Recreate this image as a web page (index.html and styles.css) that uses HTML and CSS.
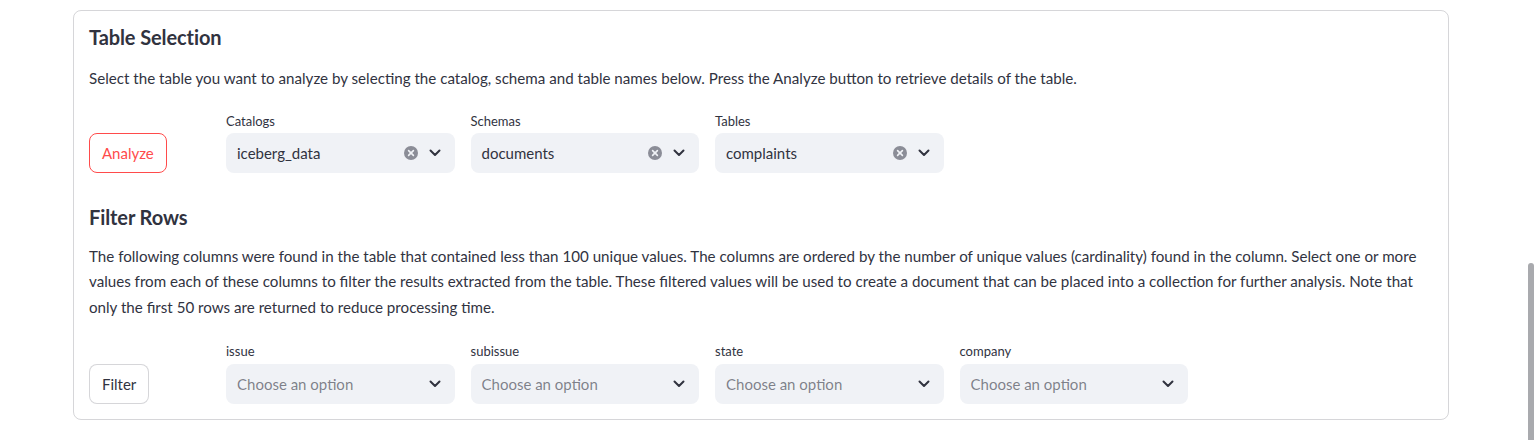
FILE: index.html
```html
<!DOCTYPE html>
<html>
<head>
<meta charset="utf-8">
<link rel="stylesheet" href="styles.css">
</head>
<body>
<div class="page">
  <section class="card">
    <h4 class="heading">Table Selection</h4>
    <p class="text text-1">Select the table you want to analyze by selecting the catalog, schema and table names below. Press the Analyze button to retrieve details of the table.</p>
    <div class="row row-1">
      <div class="btn-col"><button class="btn btn-primary">Analyze</button></div>
      <div class="field">
        <div class="label">Catalogs</div>
        <div class="select">
          <span class="value">iceberg_data</span>
          <span class="clear"><svg width="14" height="14" viewBox="0 0 14 14"><circle cx="7" cy="7" r="7" fill="#8b8d97"/><path d="M4.6 4.6 L9.4 9.4 M9.4 4.6 L4.6 9.4" stroke="#f0f2f6" stroke-width="1.6" stroke-linecap="round"/></svg></span>
          <span class="chev"><svg width="12" height="8" viewBox="0 0 12 8"><path d="M1.5 1.5 L6 6 L10.5 1.5" fill="none" stroke="#31333f" stroke-width="2" stroke-linecap="round" stroke-linejoin="round"/></svg></span>
        </div>
      </div>
      <div class="field">
        <div class="label">Schemas</div>
        <div class="select">
          <span class="value">documents</span>
          <span class="clear"><svg width="14" height="14" viewBox="0 0 14 14"><circle cx="7" cy="7" r="7" fill="#8b8d97"/><path d="M4.6 4.6 L9.4 9.4 M9.4 4.6 L4.6 9.4" stroke="#f0f2f6" stroke-width="1.6" stroke-linecap="round"/></svg></span>
          <span class="chev"><svg width="12" height="8" viewBox="0 0 12 8"><path d="M1.5 1.5 L6 6 L10.5 1.5" fill="none" stroke="#31333f" stroke-width="2" stroke-linecap="round" stroke-linejoin="round"/></svg></span>
        </div>
      </div>
      <div class="field">
        <div class="label">Tables</div>
        <div class="select">
          <span class="value">complaints</span>
          <span class="clear"><svg width="14" height="14" viewBox="0 0 14 14"><circle cx="7" cy="7" r="7" fill="#8b8d97"/><path d="M4.6 4.6 L9.4 9.4 M9.4 4.6 L4.6 9.4" stroke="#f0f2f6" stroke-width="1.6" stroke-linecap="round"/></svg></span>
          <span class="chev"><svg width="12" height="8" viewBox="0 0 12 8"><path d="M1.5 1.5 L6 6 L10.5 1.5" fill="none" stroke="#31333f" stroke-width="2" stroke-linecap="round" stroke-linejoin="round"/></svg></span>
        </div>
      </div>
    </div>

    <h4 class="heading heading-2">Filter Rows</h4>
    <p class="text text-2">The following columns were found in the table that contained less than 100 unique values. The columns are ordered by the number of unique values (cardinality) found in the column. Select one or more values from each of these columns to filter the results extracted from the table. These filtered values will be used to create a document that can be placed into a collection for further analysis. Note that only the first 50 rows are returned to reduce processing time.</p>
    <div class="row row-2">
      <div class="btn-col"><button class="btn">Filter</button></div>
      <div class="field">
        <div class="label">issue</div>
        <div class="select">
          <span class="value placeholder">Choose an option</span>
          <span class="chev"><svg width="12" height="8" viewBox="0 0 12 8"><path d="M1.5 1.5 L6 6 L10.5 1.5" fill="none" stroke="#31333f" stroke-width="2" stroke-linecap="round" stroke-linejoin="round"/></svg></span>
        </div>
      </div>
      <div class="field">
        <div class="label">subissue</div>
        <div class="select">
          <span class="value placeholder">Choose an option</span>
          <span class="chev"><svg width="12" height="8" viewBox="0 0 12 8"><path d="M1.5 1.5 L6 6 L10.5 1.5" fill="none" stroke="#31333f" stroke-width="2" stroke-linecap="round" stroke-linejoin="round"/></svg></span>
        </div>
      </div>
      <div class="field">
        <div class="label">state</div>
        <div class="select">
          <span class="value placeholder">Choose an option</span>
          <span class="chev"><svg width="12" height="8" viewBox="0 0 12 8"><path d="M1.5 1.5 L6 6 L10.5 1.5" fill="none" stroke="#31333f" stroke-width="2" stroke-linecap="round" stroke-linejoin="round"/></svg></span>
        </div>
      </div>
      <div class="field">
        <div class="label">company</div>
        <div class="select">
          <span class="value placeholder">Choose an option</span>
          <span class="chev"><svg width="12" height="8" viewBox="0 0 12 8"><path d="M1.5 1.5 L6 6 L10.5 1.5" fill="none" stroke="#31333f" stroke-width="2" stroke-linecap="round" stroke-linejoin="round"/></svg></span>
        </div>
      </div>
    </div>
  </section>
  <div class="scrollbar"></div>
</div>
</body>
</html>
```

FILE: styles.css
```css
* { box-sizing: border-box; }
html, body { margin: 0; padding: 0; background: #ffffff; }
body {
  font-family: Lato, "Liberation Sans", sans-serif;
  color: rgb(49, 51, 63);
  height: 440px;
  overflow: hidden;
}
.page {
  position: relative;
  height: 440px;
  padding: 10px 0 0 73px;
}
.card {
  width: 1376px;
  height: 410px;
  border: 1px solid rgba(49, 51, 63, 0.2);
  border-radius: 8px;
  padding: 14px 15px 15px 15px;
}
.heading {
  margin: 0;
  font-size: 20px;
  line-height: 24px;
  font-weight: 700;
  letter-spacing: -0.1px;
}
.heading-2 { margin-top: 32px; }
.text {
  margin: 0;
  font-size: 15.15px;
  line-height: 25.6px;
}
.text-1 { margin-top: 17px; }
.text-2 { margin-top: 15px; }
.row {
  display: flex;
  align-items: flex-end;
  gap: 16px;
}
.row-1 { margin-top: 19px; }
.row-2 { margin-top: 21px; }
.row-2 .label { margin-bottom: 3px; }
.btn-col { width: 121px; flex: none; }
.btn {
  font-family: inherit;
  font-size: 15px;
  height: 40px;
  padding: 0 12px;
  background: #ffffff;
  color: rgb(49, 51, 63);
  border: 1px solid rgba(49, 51, 63, 0.2);
  border-radius: 8px;
  display: block;
}
.btn-primary {
  color: rgb(255, 75, 75);
  border-color: rgb(255, 75, 75);
}
.field { width: 228.5px; flex: none; }
.label {
  font-size: 13px;
  line-height: 20px;
  margin-bottom: 2px;
}
.select {
  height: 40px;
  background: rgb(240, 242, 246);
  border-radius: 8px;
  display: flex;
  align-items: center;
  padding: 0 14px 0 11px;
}
.value {
  flex: 1;
  font-size: 15px;
  white-space: nowrap;
}
.placeholder { color: rgba(49, 51, 63, 0.6); }
.clear { display: flex; margin-right: 11px; }
.chev { display: flex; }
.scrollbar {
  position: absolute;
  right: 1px;
  top: 263px;
  width: 6px;
  height: 190px;
  border-radius: 3px;
  background: #a9aaae;
}
```
